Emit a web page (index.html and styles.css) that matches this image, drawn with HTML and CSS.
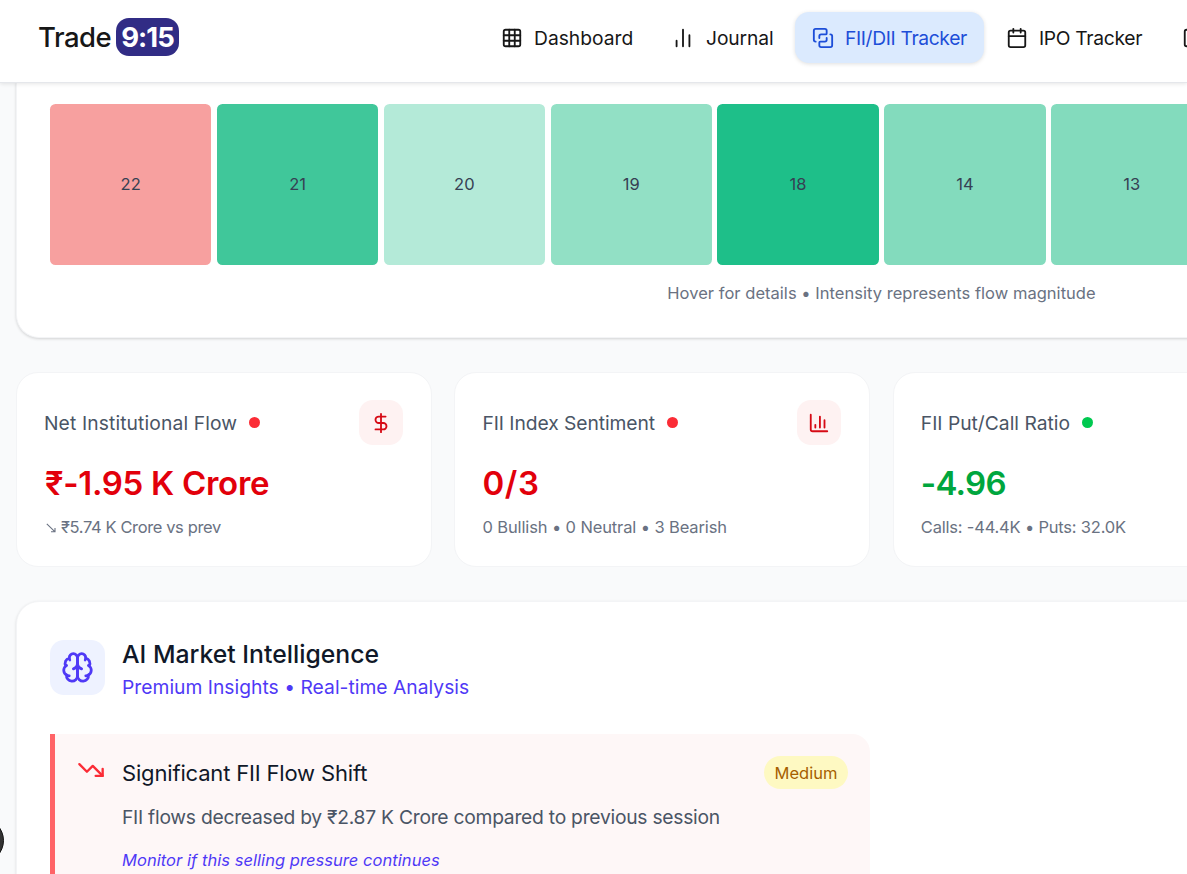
FILE: index.html
```html
<!DOCTYPE html>
<html lang="en">
<head>
<meta charset="utf-8">
<title>Trade 9:15</title>
<link rel="stylesheet" href="styles.css">
</head>
<body>
<header class="topbar">
  <div class="brand"><span class="brand-name">Trade</span><span class="brand-time">9:15</span></div>
  <nav class="nav">
    <a class="nav-item dash"><svg class="icon" viewBox="0 0 24 24"><rect x="3" y="3" width="18" height="18" rx="2"/><path d="M3 9h18M3 15h18M9 3v18M15 3v18"/></svg><span>Dashboard</span></a>
    <a class="nav-item journal"><svg class="icon" viewBox="0 0 24 24"><path d="M5 21v-6M12 21V3M19 21V9"/></svg><span>Journal</span></a>
    <a class="nav-item active"><svg class="icon" viewBox="0 0 24 24"><path d="M16 12v2a2 2 0 0 1-2 2H9a1 1 0 0 0-1 1v3a2 2 0 0 0 2 2h10a2 2 0 0 0 2-2V10a2 2 0 0 0-2-2h0"/><path d="M4 16a2 2 0 0 1-2-2V4a2 2 0 0 1 2-2h10a2 2 0 0 1 2 2v3a1 1 0 0 1-1 1h-5a2 2 0 0 0-2 2v2"/></svg><span>FII/DII Tracker</span></a>
    <a class="nav-item ipo"><svg class="icon" viewBox="0 0 24 24"><path d="M8 2v4M16 2v4M3 10h18"/><rect x="3" y="4" width="18" height="18" rx="2"/></svg><span>IPO Tracker</span></a>
    <a class="nav-item last"><svg class="icon" viewBox="0 0 24 24"><rect x="3" y="3" width="18" height="18" rx="2"/></svg></a>
  </nav>
</header>
<main class="page">
  <section class="panel heat">
    <div class="tiles">
      <div class="tile red">22</div><div class="tile g4">21</div><div class="tile g1">20</div><div class="tile g2">19</div><div class="tile g5">18</div><div class="tile g3">14</div><div class="tile g3">13</div>
    </div>
    <p class="hint">Hover for details • Intensity represents flow magnitude</p>
  </section>
  <section class="stats">
    <article class="stat">
      <div class="stat-head"><h3 class="t-net">Net Institutional Flow</h3><i class="dot"></i><span class="badge-icon"><svg class="icon" viewBox="0 0 24 24"><path d="M12 2v20M17 5H9.5a3.5 3.5 0 0 0 0 7h5a3.5 3.5 0 0 1 0 7H6"/></svg></span></div>
      <div class="value v-net">₹-1.95 K Crore</div>
      <p class="sub s-net"><svg class="down" viewBox="0 0 10 10"><path d="M.8 .8 8.8 8.6M5 8.8h4V5"/></svg>₹5.74 K Crore vs prev</p>
    </article>
    <article class="stat">
      <div class="stat-head"><h3 class="t-idx">FII Index Sentiment</h3><i class="dot"></i><span class="badge-icon"><svg class="icon" viewBox="0 0 24 24"><path d="M3 3v16a2 2 0 0 0 2 2h16M8 17v-3M13 17V5M18 17V9"/></svg></span></div>
      <div class="value v-idx">0/3</div>
      <p class="sub s-idx">0 Bullish • 0 Neutral • 3 Bearish</p>
    </article>
    <article class="stat">
      <div class="stat-head"><h3 class="t-pcr">FII Put/Call Ratio</h3><i class="dot green"></i></div>
      <div class="value green v-pcr">-4.96</div>
      <p class="sub s-pcr">Calls: -44.4K • Puts: 32.0K</p>
    </article>
    <article class="stat"></article>
  </section>
  <section class="panel ai">
    <div class="ai-head">
      <span class="brain"><svg class="icon" viewBox="0 0 24 24"><path d="M12 5a3 3 0 1 0-5.997.125 4 4 0 0 0-2.526 5.77 4 4 0 0 0 .556 6.588A4 4 0 1 0 12 18Z"/><path d="M12 5a3 3 0 1 1 5.997.125 4 4 0 0 1 2.526 5.77 4 4 0 0 1-.556 6.588A4 4 0 1 1 12 18Z"/><path d="M15 13a4.5 4.5 0 0 1-3-4 4.5 4.5 0 0 1-3 4M17.599 6.5a3 3 0 0 0 .399-1.375M6.003 5.125A3 3 0 0 0 6.401 6.5M3.477 10.896a4 4 0 0 1 .585-.396M19.938 10.5a4 4 0 0 1 .585.396M6 18a4 4 0 0 1-1.967-.516M19.967 17.484A4 4 0 0 1 18 18"/></svg></span>
      <div><h2>AI Market Intelligence</h2><p>Premium Insights • Real-time Analysis</p></div>
    </div>
    <div class="insights">
      <article class="insight">
        <svg class="icon trend" viewBox="0 0 24 24"><path d="m22 17-8.500-8.500-5 5L2 7"/><path d="M16 17h6v-6"/></svg>
        <div class="insight-body">
          <div class="insight-title"><h4>Significant FII Flow Shift</h4><span class="pill">Medium</span></div>
          <p class="desc">FII flows decreased by ₹2.87 K Crore compared to previous session</p>
          <p class="advice">Monitor if this selling pressure continues</p>
        </div>
      </article>
    </div>
  </section>
</main>
<div class="floater"></div>
</body>
</html>
```
FILE: styles.css
```css
*{box-sizing:border-box}
html{overflow:hidden}
body{margin:0;width:1187px;height:874px;overflow:hidden;background:#f9fafb;font-family:Inter,"Noto Sans",sans-serif;color:#101828;position:relative}
h2,h3,h4,p{margin:0;font-weight:400;white-space:nowrap}
.icon{fill:none;stroke:currentColor;stroke-width:2;stroke-linecap:round;stroke-linejoin:round;flex:none;display:block;width:22px;height:22px}
.topbar{position:relative;z-index:2;height:83px;background:#fff;border-bottom:1px solid #e5e7eb;box-shadow:0 1px 4px rgba(0,0,0,.1);display:flex;padding:12px 0 0 38px}
.brand{display:flex;align-items:center;height:50px;gap:6px;font-size:27.500px;color:#171717;width:445px;flex:none}
.brand-name{font-weight:500;letter-spacing:-.5px;width:72px}
.brand-time{background:#312c85;color:#fff;font-weight:700;border-radius:13px;width:63px;height:38px;line-height:39px;text-align:center;letter-spacing:-1px}
.nav{display:flex}
.nav-item{display:flex;align-items:center;height:51px;gap:11px;padding:0 17px 0 18px;font-size:19.250px;color:#171717;border-radius:14px;white-space:nowrap;flex:none}
.nav-item span{display:block}
.dash{width:171px}
.journal{width:141px;letter-spacing:-.1px;gap:12px}
.active{width:189px;padding-left:17px;background:#dbeafe;color:#1d4ed8;box-shadow:0 1px 4px rgba(0,0,0,.13);letter-spacing:-.36px}
.ipo{width:180px;margin-left:4px;letter-spacing:-.32px}
.last{padding-left:14px}
.page{width:1763px;padding-left:16px}
.panel{background:#fff;border:1px solid #f3f4f6;width:1731px}
.heat{height:256px;margin-top:-1px;padding:22px 33px 0;border-top:0;border-radius:0 0 23px 23px;box-shadow:0 1px 3px rgba(0,0,0,.16)}
.tiles{display:grid;grid-template-columns:repeat(10,161.350px);gap:5.500px}
.tile{height:161px;border-radius:5.500px;display:flex;align-items:center;justify-content:center;font-size:16.500px;color:#364153;padding-bottom:2px}
.red{background:#f7a09f}.g1{background:#b4ead8}.g2{background:#92e0c5}.g3{background:#83dbbd}.g4{background:#40c79a}.g5{background:#1ebf89}
.hint{margin-top:17px;line-height:22px;text-align:center;font-size:16.500px;letter-spacing:.03px;color:#6a7282}
.stats{display:grid;grid-template-columns:repeat(4,415.500px);gap:22.900px;margin-top:34px}
.stat{height:195px;background:#fff;border:1px solid #f3f4f6;border-radius:22px;padding:27px 28px 0 27px}
.stat-head{display:flex;align-items:center;height:45px}
.stat h3{font-size:19.250px;color:#4a5565}
.stat .t-net{letter-spacing:.12px}
.stat .t-idx{letter-spacing:-.06px}
.dot{width:11px;height:11px;border-radius:50%;background:#fb2c36;margin-left:12px}
.dot.green{background:#00c950}
.badge-icon{margin-left:auto;width:44px;height:45px;border-radius:14px;background:#fef2f2;color:#d60a15;display:grid;place-items:center}
.value{margin-top:16px;height:44px;line-height:44px;font-size:33px;font-weight:600;color:#e2000b;white-space:nowrap}
.v-net{letter-spacing:-.3px;padding-left:1px}
.v-idx{letter-spacing:.7px}
.v-pcr{letter-spacing:-.7px}
.value.green{color:#00a63e}
.sub{margin-top:11px;line-height:22px;font-size:16.500px;color:#6a7282}
.s-net{letter-spacing:-.38px}
.s-idx{letter-spacing:-.12px}
.s-pcr{letter-spacing:-.2px}
.down{width:10px;height:10px;fill:none;stroke:currentColor;stroke-width:1.100;margin:0 5px 0 2px}
.ai{height:420px;margin-top:34px;border-radius:23px;padding:38px 33px;box-shadow:0 1px 3px rgba(0,0,0,.13)}
.ai-head{display:flex;gap:17px}
.brain{width:55px;height:55px;border-radius:14px;background:#eef2ff;color:#4f39f6;display:grid;place-items:center}
.brain .icon{width:33px;height:33px}
.ai h2{font-size:24.750px;font-weight:500;line-height:33px;margin-top:-2px}
.ai-head p{font-size:19.250px;line-height:28px;color:#4f39f6;margin-top:2px;letter-spacing:.02px}
.insights{display:grid;grid-template-columns:820px 820px;margin-top:33px}
.insight{height:240px;background:#fef7f7;border-left:5px solid #ff6467;border-radius:0 18px 0 0;padding:22px 22px 0 22px;display:flex;gap:17px}
.trend{width:28px;height:28px;color:#fb2c36}
.insight-body{flex:1}
.insight-title{display:flex;justify-content:space-between;height:33px;align-items:center}
h4{font-size:22px;letter-spacing:-.17px}
.pill{height:33px;width:84px;border-radius:17px;background:#fef9c2;color:#a65f00;font-size:16.500px;line-height:34px;text-align:center}
.desc{margin-top:14px;font-size:19.250px;line-height:28px;color:#4a5565;letter-spacing:-.25px}
.advice{margin-top:18px;font-size:16.500px;line-height:22px;color:#4f39f6;font-style:italic;letter-spacing:.05px}
.floater{position:absolute;z-index:3;left:-41px;top:818px;width:45px;height:45px;border-radius:50%;background:#333;border:1px solid #111}
```
